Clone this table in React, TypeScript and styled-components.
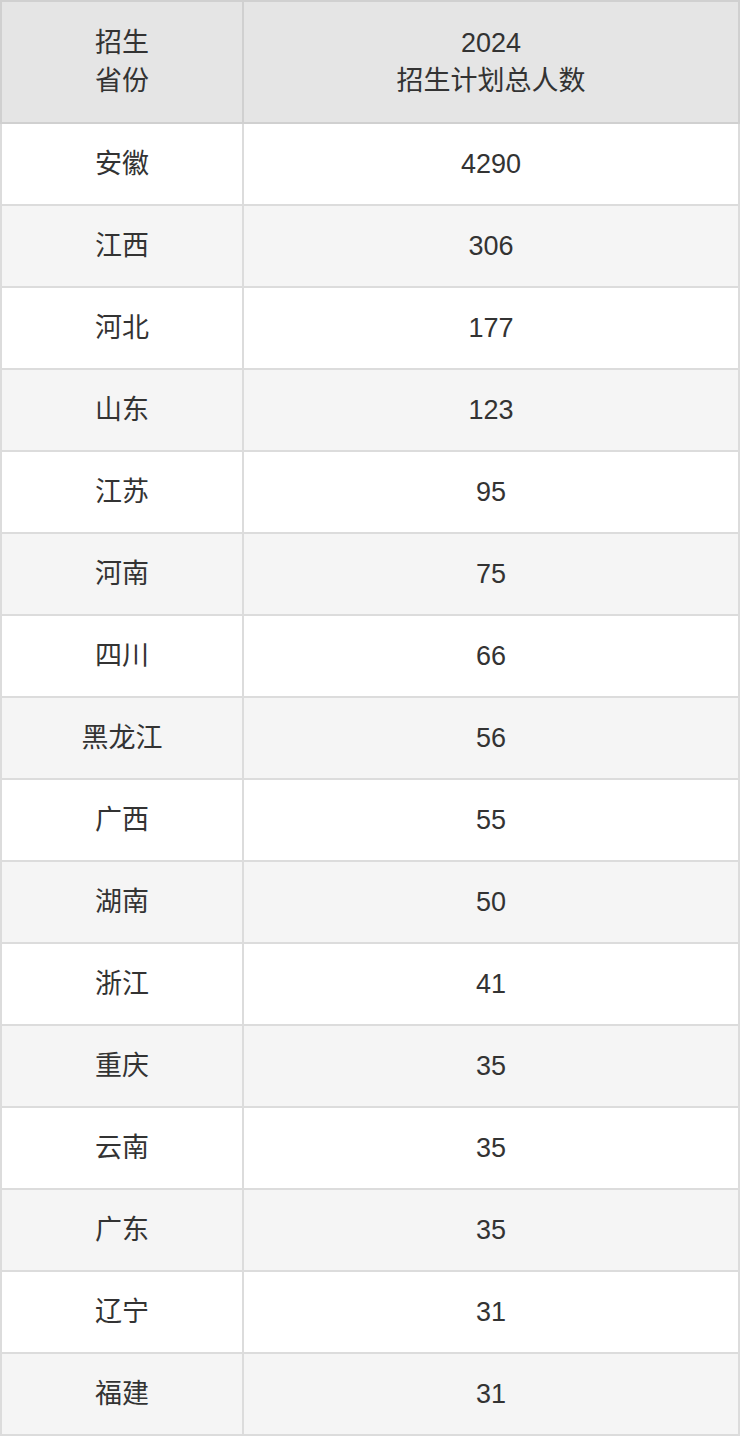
import styled, { createGlobalStyle } from 'styled-components'

const GlobalStyle = createGlobalStyle`
    html, body {
        margin: 0;
        padding: 0;
        background: #fff;
    }
    body {
        font-family: "Liberation Sans", "Noto Sans CJK SC", sans-serif;
        color: #333;
    }
`;

const Table = styled.table`
    width: 740px;
    border-collapse: collapse;
    table-layout: fixed;
    font-size: 27px;
    line-height: 38px;
`;

const HeadCell = styled.th<{ $w?: number }>`
    width: ${p => (p.$w ? `${p.$w}px` : 'auto')};
    height: 120px;
    padding: 0;
    background: #e5e5e5;
    border: 2px solid #d0d0d0;
    font-weight: normal;
    text-align: center;
    vertical-align: middle;
`;

const Row = styled.tr<{ $alt: boolean }>`
    background: ${p => (p.$alt ? '#f5f5f5' : '#fff')};
`;

const Cell = styled.td`
    height: 80px;
    padding: 0;
    border: 2px solid #dcdcdc;
    text-align: center;
    vertical-align: middle;
`;

const rows: [string, number][] = [
    ['安徽', 4290],
    ['江西', 306],
    ['河北', 177],
    ['山东', 123],
    ['江苏', 95],
    ['河南', 75],
    ['四川', 66],
    ['黑龙江', 56],
    ['广西', 55],
    ['湖南', 50],
    ['浙江', 41],
    ['重庆', 35],
    ['云南', 35],
    ['广东', 35],
    ['辽宁', 31],
    ['福建', 31],
]

const App = () => {
    return (
        <>
            <GlobalStyle />
            <Table>
                <thead>
                    <tr>
                        <HeadCell $w={240}>招生<br />省份</HeadCell>
                        <HeadCell>2024<br />招生计划总人数</HeadCell>
                    </tr>
                </thead>
                <tbody>
                    {rows.map(([name, num], i) => (
                        <Row key={name + i} $alt={i % 2 === 1}>
                            <Cell>{name}</Cell>
                            <Cell>{num}</Cell>
                        </Row>
                    ))}
                </tbody>
            </Table>
        </>
    )
}

export default App
